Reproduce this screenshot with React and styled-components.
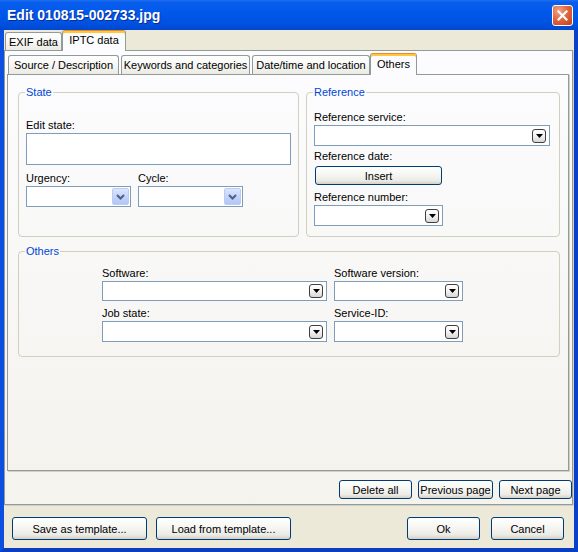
import React from 'react';
import styled, { createGlobalStyle } from 'styled-components';

const GlobalStyle = createGlobalStyle`
  html, body { margin: 0; padding: 0; background: #ffffff; }
  body { font-family: "Liberation Sans", Arial, sans-serif; font-size: 11px; color: #000; }
  *, *::before, *::after { box-sizing: border-box; }
`;

const Window = styled.div`
  width: 578px;
  height: 552px;
  display: flex;
  flex-direction: column;
  background: #0842d0;
`;

const TitleBar = styled.div`
  height: 30px;
  flex: none;
  display: flex;
  align-items: center;
  justify-content: space-between;
  padding: 0 5px 0 7px;
  background: linear-gradient(to bottom, #1c6ff0 0%, #0a5eed 8%, #0058eb 40%, #0052e2 75%, #0047d0 100%);
`;

const Title = styled.span`
  color: #ffffff;
  font-weight: bold;
  font-size: 14px;
  font-family: "Liberation Sans", Arial, sans-serif;
  text-shadow: 1px 1px 0 #0b2d93;
`;

const CloseButton = styled.div`
  width: 21px;
  height: 21px;
  border: 1px solid #ffffff;
  border-radius: 3px;
  background: radial-gradient(circle at 30% 25%, #f2a486 0%, #e2673f 45%, #c63d1a 100%);
  display: flex;
  align-items: center;
  justify-content: center;
  margin-top: 1px;
`;

const Frame = styled.div`
  flex: 1;
  display: flex;
  flex-direction: column;
  background: #ece9d8;
  border-left: 4px solid #0b4fe0;
  border-right: 4px solid #0a40c8;
  border-bottom: 4px solid #0a3dc2;
`;

const TabStrip = styled.div`
  display: flex;
  align-items: flex-end;
  flex: none;
  height: ${p => p.$h}px;
  padding-left: ${p => p.$pl}px;
  position: relative;
  z-index: 1;
`;

const Tab = styled.div`
  width: ${p => p.$w}px;
  height: ${p => (p.$active ? p.$h + 3 : p.$h)}px;
  margin-bottom: ${p => (p.$active ? -1 : 0)}px;
  margin-right: ${p => (p.$mr !== undefined ? p.$mr : 2)}px;
  border: 1px solid #919b9c;
  border-bottom: none;
  border-radius: 3px 3px 0 0;
  display: flex;
  align-items: center;
  justify-content: center;
  padding-bottom: ${p => (p.$active ? 2 : 0)}px;
  white-space: nowrap;
  background: ${p =>
    p.$active ? '#fcfcfe' : 'linear-gradient(to bottom, #ffffff 0%, #f7f7f4 50%, #ebeae3 100%)'};
  border-top-color: ${p => (p.$active ? '#e68b2c' : '#919b9c')};
  box-shadow: ${p => (p.$active ? 'inset 0 2px 0 #ffc83c' : 'none')};
`;

const Pane = styled.div`
  flex: none;
  display: flex;
  flex-direction: column;
  width: ${p => p.$w}px;
  height: ${p => p.$h}px;
  margin-left: ${p => p.$ml || 0}px;
  border: 1px solid #919b9c;
  background: linear-gradient(to bottom, #fcfcfe 0%, #f4f3ee 100%);
  box-shadow: 1px 1px 0 #d4d0c0;
`;

const PageBody = styled.div`
  display: flex;
  flex-direction: column;
  padding: 11px 8px 0 10px;
`;

const GroupRow = styled.div`
  display: flex;
  gap: 7px;
  align-items: stretch;
`;

const Group = styled.fieldset`
  margin: ${p => p.$mt || 0}px 0 0 0;
  padding: 0;
  width: ${p => p.$w}px;
  border: 1px solid #d0d0bf;
  border-radius: 4px;
  min-width: 0;
`;

const Legend = styled.legend`
  color: #0046d5;
  line-height: 13px;
  padding: 0 1px;
  margin-left: 6px;
`;

const GroupBody = styled.div`
  display: flex;
  flex-direction: column;
  align-items: flex-start;
  padding: ${p => p.$pt}px 0 10px ${p => p.$pl}px;
`;

const Label = styled.div`
  line-height: 13px;
  height: 13px;
  margin-top: ${p => p.$mt || 0}px;
  white-space: nowrap;
`;

const Field = styled.div`
  display: flex;
  flex-direction: column;
`;

const FieldRow = styled.div`
  display: flex;
  gap: 7px;
  margin-top: ${p => p.$mt || 0}px;
`;

const TextBox = styled.div`
  width: ${p => p.$w}px;
  height: ${p => p.$h}px;
  margin-top: 1px;
  background: #ffffff;
  border: 1px solid #7f9db9;
`;

const Combo = styled.div`
  width: ${p => p.$w}px;
  height: ${p => p.$h || 21}px;
  margin-top: 1px;
  background: #ffffff;
  border: 1px solid #7f9db9;
  display: flex;
  align-items: center;
  justify-content: flex-end;
  padding: ${p => (p.$xp ? '1px' : '0 3px 0 0')};
`;

const XPDrop = styled.div`
  width: 17px;
  align-self: stretch;
  border: 1px solid #bccbf2;
  border-radius: 2px;
  background: linear-gradient(to bottom, #dbe5fd 0%, #c4d4fa 50%, #b3c7f5 100%);
  display: flex;
  align-items: center;
  justify-content: center;
`;

const ClassicDrop = styled.div`
  width: 14px;
  height: 14px;
  border: 1px solid #3f3f3f;
  border-radius: 3px;
  background: linear-gradient(to bottom, #ffffff 0%, #f2f2f2 50%, #d6d6d6 100%);
  display: flex;
  align-items: center;
  justify-content: center;
`;

const Button = styled.div`
  width: ${p => p.$w}px;
  height: ${p => p.$h}px;
  margin-top: ${p => p.$mt || 0}px;
  margin-left: ${p => p.$ml || 0}px;
  border: 1px solid #003c74;
  border-radius: 3px;
  background: linear-gradient(to bottom, #ffffff 0%, #f7f7f4 40%, #ecebe6 80%, #d6d0c5 100%);
  display: flex;
  align-items: center;
  justify-content: center;
  white-space: nowrap;
  flex: none;
`;

const OthersGrid = styled.div`
  display: grid;
  grid-template-columns: 225px 129px;
  column-gap: 7px;
  row-gap: 6px;
  padding: 9px 0 14px 83px;
`;

const PageButtons = styled.div`
  display: flex;
  justify-content: flex-end;
  gap: 6px;
  margin-top: 9px;
`;

const BottomBar = styled.div`
  display: flex;
  justify-content: space-between;
  padding: 12px 10px 0 8px;
`;

const ButtonGroup = styled.div`
  display: flex;
  gap: ${p => p.$gap}px;
`;

const Chevron = () => (
  <svg width="9" height="6" viewBox="0 0 9 6">
    <polyline points="1,1 4.5,4.5 8,1" fill="none" stroke="#4d6185" strokeWidth="2" />
  </svg>
);

const Triangle = () => (
  <svg width="7" height="4" viewBox="0 0 7 4">
    <polygon points="0,0 7,0 3.5,4" fill="#000" />
  </svg>
);

const XPCombo = ({ w }) => (
  <Combo $w={w} $xp>
    <XPDrop>
      <Chevron />
    </XPDrop>
  </Combo>
);

const ClassicCombo = ({ w, h }) => (
  <Combo $w={w} $h={h}>
    <ClassicDrop>
      <Triangle />
    </ClassicDrop>
  </Combo>
);

export default function App() {
  return (
    <>
      <GlobalStyle />
      <Window>
        <TitleBar>
          <Title>Edit 010815-002733.jpg</Title>
          <CloseButton>
            <svg width="11" height="11" viewBox="0 0 11 11">
              <path d="M1.5 1.5 L9.5 9.5 M9.5 1.5 L1.5 9.5" stroke="#fff" strokeWidth="2.2" strokeLinecap="square" />
            </svg>
          </CloseButton>
        </TitleBar>
        <Frame>
          <TabStrip $h={20} $pl={1}>
            <Tab $w={57} $h={18} $mr={0}>EXIF data</Tab>
            <Tab $w={64} $h={18} $mr={0} $active>IPTC data</Tab>
          </TabStrip>
          <Pane $w={569} $h={455}>
            <TabStrip $h={23} $pl={3}>
              <Tab $w={111} $h={19}>Source / Description</Tab>
              <Tab $w={129} $h={19}>Keywords and categories</Tab>
              <Tab $w={118} $h={19} $mr={0}>Date/time and location</Tab>
              <Tab $w={47} $h={19} $mr={0} $active>Others</Tab>
            </TabStrip>
            <Pane $w={562} $h={397} $ml={2}>
              <PageBody>
                <GroupRow>
                  <Group $w={281}>
                    <Legend>State</Legend>
                    <GroupBody $pt={20} $pl={7}>
                      <Label>Edit state:</Label>
                      <TextBox $w={265} $h={32} />
                      <FieldRow $mt={7}>
                        <Field>
                          <Label>Urgency:</Label>
                          <XPCombo w={105} />
                        </Field>
                        <Field>
                          <Label>Cycle:</Label>
                          <XPCombo w={105} />
                        </Field>
                      </FieldRow>
                    </GroupBody>
                  </Group>
                  <Group $w={254}>
                    <Legend>Reference</Legend>
                    <GroupBody $pt={12} $pl={7}>
                      <Label>Reference service:</Label>
                      <ClassicCombo w={236} h={21} />
                      <Label $mt={4}>Reference date:</Label>
                      <Button $w={127} $h={19} $mt={3} $ml={1}>Insert</Button>
                      <Label $mt={6}>Reference number:</Label>
                      <ClassicCombo w={129} h={21} />
                    </GroupBody>
                  </Group>
                </GroupRow>
                <Group $w={542} $mt={8}>
                  <Legend>Others</Legend>
                  <OthersGrid>
                    <Field>
                      <Label>Software:</Label>
                      <ClassicCombo w={225} h={20} />
                    </Field>
                    <Field>
                      <Label>Software version:</Label>
                      <ClassicCombo w={129} h={20} />
                    </Field>
                    <Field>
                      <Label>Job state:</Label>
                      <ClassicCombo w={225} h={21} />
                    </Field>
                    <Field>
                      <Label>Service-ID:</Label>
                      <ClassicCombo w={129} h={21} />
                    </Field>
                  </OthersGrid>
                </Group>
              </PageBody>
            </Pane>
            <PageButtons>
              <Button $w={73} $h={19}>Delete all</Button>
              <Button $w={75} $h={19}>Previous page</Button>
              <Button $w={73} $h={19}>Next page</Button>
            </PageButtons>
          </Pane>
          <BottomBar>
            <ButtonGroup $gap={9}>
              <Button $w={135} $h={23}>Save as template...</Button>
              <Button $w={135} $h={23}>Load from template...</Button>
            </ButtonGroup>
            <ButtonGroup $gap={11}>
              <Button $w={73} $h={23}>Ok</Button>
              <Button $w={73} $h={23}>Cancel</Button>
            </ButtonGroup>
          </BottomBar>
        </Frame>
      </Window>
    </>
  );
}
